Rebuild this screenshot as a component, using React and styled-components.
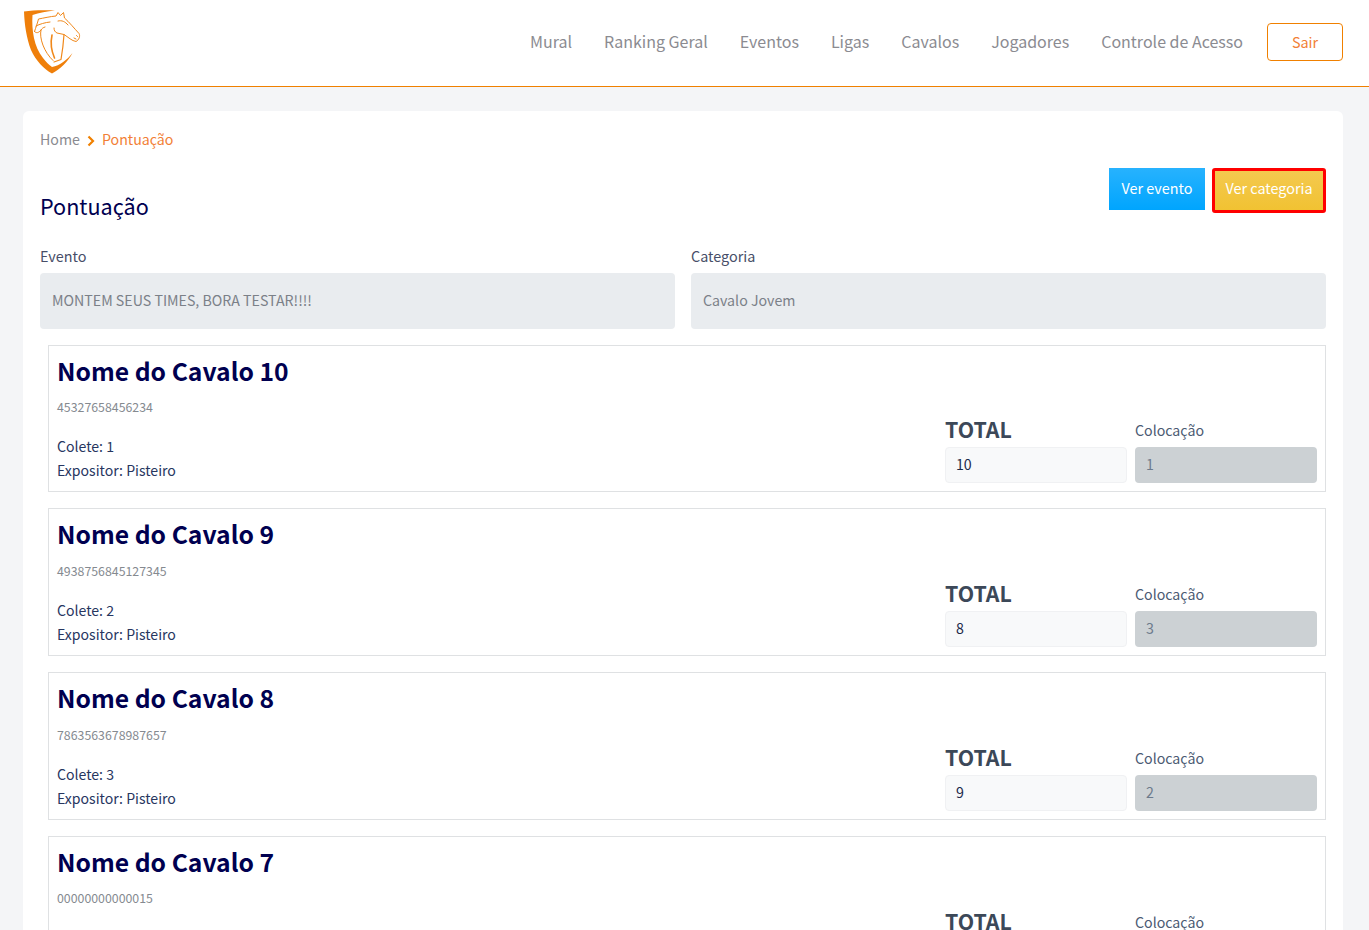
import React from "react";
import styled, { createGlobalStyle } from "styled-components";

const Global = createGlobalStyle`
  html, body { margin: 0; padding: 0; height: 930px; overflow: hidden; background: #f4f5f7; }
  * { box-sizing: border-box; }
  body { font-family: "Noto Sans CJK SC", "Noto Sans", sans-serif; color: #000050; font-size: 16px; }
`;

const Header = styled.header`
  height: 87px;
  background: #fff;
  border-bottom: 1px solid #f08000;
  display: flex;
  align-items: center;
  justify-content: space-between;
  padding: 0 26px 0 23px;
`;
const LogoLink = styled.a`
  display: block;
  width: 58px;
  height: 66px;
  margin-top: -3px;
`;
const Nav = styled.nav`
  display: flex;
  align-items: center;
  margin-top: -2px;
`;
const NavItem = styled.a`
  font-size: 16px;
  line-height: 24px;
  padding-bottom: 2px;
  color: #8b8b91;
  margin-right: 32px;
  &:last-of-type { margin-right: 24px; }
`;
const LogoutButton = styled.button`
  width: 76px;
  height: 38px;
  border: 1px solid #f08000;
  border-radius: 4px;
  background: #fff;
  color: #f27f36;
  font: inherit;
  font-size: 14.4px;
  padding: 0 0 2px;
`;
const Main = styled.main`
  padding: 24px 26px 0 23px;
`;
const Panel = styled.section`
  background: #fff;
  border-radius: 6px;
  padding: 19px 17px 0;
`;
const Breadcrumb = styled.div`
  display: flex;
  align-items: center;
  height: 20px;
  padding-bottom: 2px;
  font-size: 14.2px;
  line-height: 20px;
`;
const Crumb = styled.span`
  color: ${(p) => (p.$active ? "#f27f36" : "#8a8a90")};
`;
const Chevron = styled.svg`
  width: 8px;
  height: 12px;
  margin: 3px 7px 0 7px;
`;
const TitleRow = styled.div`
  display: flex;
  justify-content: space-between;
  align-items: flex-start;
  margin-top: 18px;
  height: 76px;
`;
const Title = styled.h1`
  margin: 23px 0 0;
  font-size: 21.6px;
  line-height: 30px;
  font-weight: 400;
  color: #000050;
`;
const Actions = styled.div`
  display: flex;
  gap: 7px;
  align-items: flex-start;
`;
const ActionButton = styled.button`
  height: ${(p) => (p.$outlined ? "45px" : "42px")};
  width: ${(p) => (p.$outlined ? "114px" : "96px")};
  padding: ${(p) => (p.$outlined ? "0 0 6px" : "0 0 2px")};
  color: #fff;
  font: inherit;
  font-size: 14.4px;
  line-height: 20px;
  border: ${(p) => (p.$outlined ? "3px solid #ff0000" : "0")};
  border-radius: ${(p) => (p.$outlined ? "3px" : "0")};
  background: ${(p) =>
    p.$outlined
      ? "linear-gradient(#f4c94f, #f1c232)"
      : "linear-gradient(#27b2fe, #00a5fe)"};
`;
const TopFields = styled.div`
  display: grid;
  grid-template-columns: 635px 635px;
  gap: 16px;
`;
const Field = styled.div`
  display: flex;
  flex-direction: column;
`;
const FieldLabel = styled.label`
  font-size: 14.4px;
  line-height: 20px;
  height: 29px;
  padding-top: 2px;
  color: #474e68;
`;
const ReadOnlyBox = styled.div`
  height: 56px;
  background: #e9ecef;
  border-radius: 4px;
  padding: 0 12px 3px;
  display: flex;
  align-items: center;
  font-size: 14.2px;
  color: #7b8088;
`;
const List = styled.div`
  margin: 16px 0 0 8px;
  display: flex;
  flex-direction: column;
  gap: 16px;
`;
const HorseCard = styled.article`
  height: ${(p) => p.$h}px;
  border: 1px solid #dfe1e3;
  display: flex;
  justify-content: space-between;
  padding: 0 8px 8px;
`;
const Info = styled.div`
  display: flex;
  flex-direction: column;
`;
const HorseName = styled.h2`
  margin: 6px 0 0;
  font-size: 24.7px;
  line-height: 36px;
  font-weight: 700;
  color: #000050;
`;
const Code = styled.div`
  margin-top: ${(p) => p.$mt}px;
  font-size: 12.35px;
  line-height: 16px;
  color: #858a90;
`;
const Meta = styled.div`
  margin-top: ${(p) => p.$mt || 0}px;
  font-size: 14.1px;
  line-height: 24px;
  color: #27365f;
`;
const Scores = styled.div`
  display: grid;
  grid-template-columns: 182px 182px;
  gap: 8px;
  align-self: flex-end;
`;
const ScoreCol = styled.div`
  display: flex;
  flex-direction: column;
  justify-content: flex-end;
`;
const TotalLabel = styled.div`
  font-size: 21.3px;
  line-height: 28px;
  height: 32px;
  font-weight: 700;
  color: #3c4858;
`;
const PlaceLabel = styled.div`
  font-size: 14.2px;
  line-height: 28px;
  height: 31px;
  color: #4b5a72;
`;
const TotalBox = styled.div`
  height: 36px;
  background: #f8f9fa;
  border: 1px solid #f0f1f3;
  border-radius: 4px;
  padding: 0 10px 3px;
  display: flex;
  align-items: center;
  font-size: 14.2px;
  color: #1c2a4a;
`;
const PlaceBox = styled.div`
  height: 36px;
  background: #ccd1d4;
  border-radius: 4px;
  padding: 0 11px 3px;
  display: flex;
  align-items: center;
  font-size: 14.2px;
  color: #6c7a8c;
`;

const Logo = () => (
  <svg width="58" height="66" viewBox="23 9 58 66" fill="none">
    <path
      d="M24 11.5 C33 10 45 10 55 10.5 C47 11.5 39 12.5 32.5 15 C31.5 30 34 47 43 58 C46 62 49 65 52 67 C60 65.5 67 60 72.5 53 C68 62 60 69 52 73.5 C44 69 36 61 31 50 C26.5 38 24.5 25 24 11.5 Z"
      fill="#ef7f0a"
    />
    <g stroke="#f0881a" strokeWidth="1" strokeLinecap="round" strokeLinejoin="round">
      <path d="M34.5 31.5 C36 27 37.5 23 38.5 19 C44 18 50 16.5 56 16 L58 12.5 L60.5 15.5 L63.5 12.5 L64.5 18 C69 22 74 28 79 33.5 C80.5 36 79 40 76 41.5 C72 41 68 37 64 34.5 L57 33 C55 32 54 30.5 54 28" />
      <path d="M64 34.5 C63.5 42 62 54 61 59.5 L54 62" strokeWidth="1.2" />
      <path d="M36 26 C40 24 45 22.5 50 22" />
      <path d="M34.5 31.5 C36.5 33.5 38.5 33 41 30 C42 28.5 43 27.5 45 27" />
      <path d="M41 30 C39 38 44 52 53 60.5" />
      <path d="M52 35 C50.5 42 51 50 54.5 58" strokeWidth="1.6" />
      <path d="M58 21 C62 20 65 21.5 68 25" />
      <path d="M74 38 L76 39 M76.5 35.5 L77.5 36.5" />
    </g>
  </svg>
);

const horses = [
  { name: "Nome do Cavalo 10", code: "45327658456234", colete: 1, total: 10, place: 1, h: 147, codeMt: 11, metaMt: 19 },
  { name: "Nome do Cavalo 9", code: "4938756845127345", colete: 2, total: 8, place: 3, h: 148, codeMt: 12, metaMt: 19 },
  { name: "Nome do Cavalo 8", code: "7863563678987657", colete: 3, total: 9, place: 2, h: 148, codeMt: 12, metaMt: 19 },
  { name: "Nome do Cavalo 7", code: "00000000000015", colete: 4, total: 7, place: 4, h: 148, codeMt: 11, metaMt: 19 },
];
const links = ["Mural", "Ranking Geral", "Eventos", "Ligas", "Cavalos", "Jogadores", "Controle de Acesso"];

export default function App() {
  return (
    <>
      <Global />
      <Header>
        <LogoLink><Logo /></LogoLink>
        <Nav>
          {links.map((l) => <NavItem key={l}>{l}</NavItem>)}
          <LogoutButton>Sair</LogoutButton>
        </Nav>
      </Header>
      <Main>
        <Panel>
          <Breadcrumb>
            <Crumb>Home</Crumb>
            <Chevron viewBox="0 0 8 12" fill="none">
              <path d="M1.5 1.5 L6 6 L1.5 10.5" stroke="#f08000" strokeWidth="2.2" />
            </Chevron>
            <Crumb $active>Pontuação</Crumb>
          </Breadcrumb>
          <TitleRow>
            <Title>Pontuação</Title>
            <Actions>
              <ActionButton>Ver evento</ActionButton>
              <ActionButton $outlined>Ver categoria</ActionButton>
            </Actions>
          </TitleRow>
          <TopFields>
            <Field>
              <FieldLabel>Evento</FieldLabel>
              <ReadOnlyBox>MONTEM SEUS TIMES, BORA TESTAR!!!!</ReadOnlyBox>
            </Field>
            <Field>
              <FieldLabel>Categoria</FieldLabel>
              <ReadOnlyBox>Cavalo Jovem</ReadOnlyBox>
            </Field>
          </TopFields>
          <List>
            {horses.map((h) => (
              <HorseCard key={h.name} $h={h.h}>
                <Info>
                  <HorseName>{h.name}</HorseName>
                  <Code $mt={h.codeMt}>{h.code}</Code>
                  <Meta $mt={h.metaMt}>Colete: {h.colete}</Meta>
                  <Meta>Expositor: Pisteiro</Meta>
                </Info>
                <Scores>
                  <ScoreCol>
                    <TotalLabel>TOTAL</TotalLabel>
                    <TotalBox>{h.total}</TotalBox>
                  </ScoreCol>
                  <ScoreCol>
                    <PlaceLabel>Colocação</PlaceLabel>
                    <PlaceBox>{h.place}</PlaceBox>
                  </ScoreCol>
                </Scores>
              </HorseCard>
            ))}
          </List>
        </Panel>
      </Main>
    </>
  );
}
